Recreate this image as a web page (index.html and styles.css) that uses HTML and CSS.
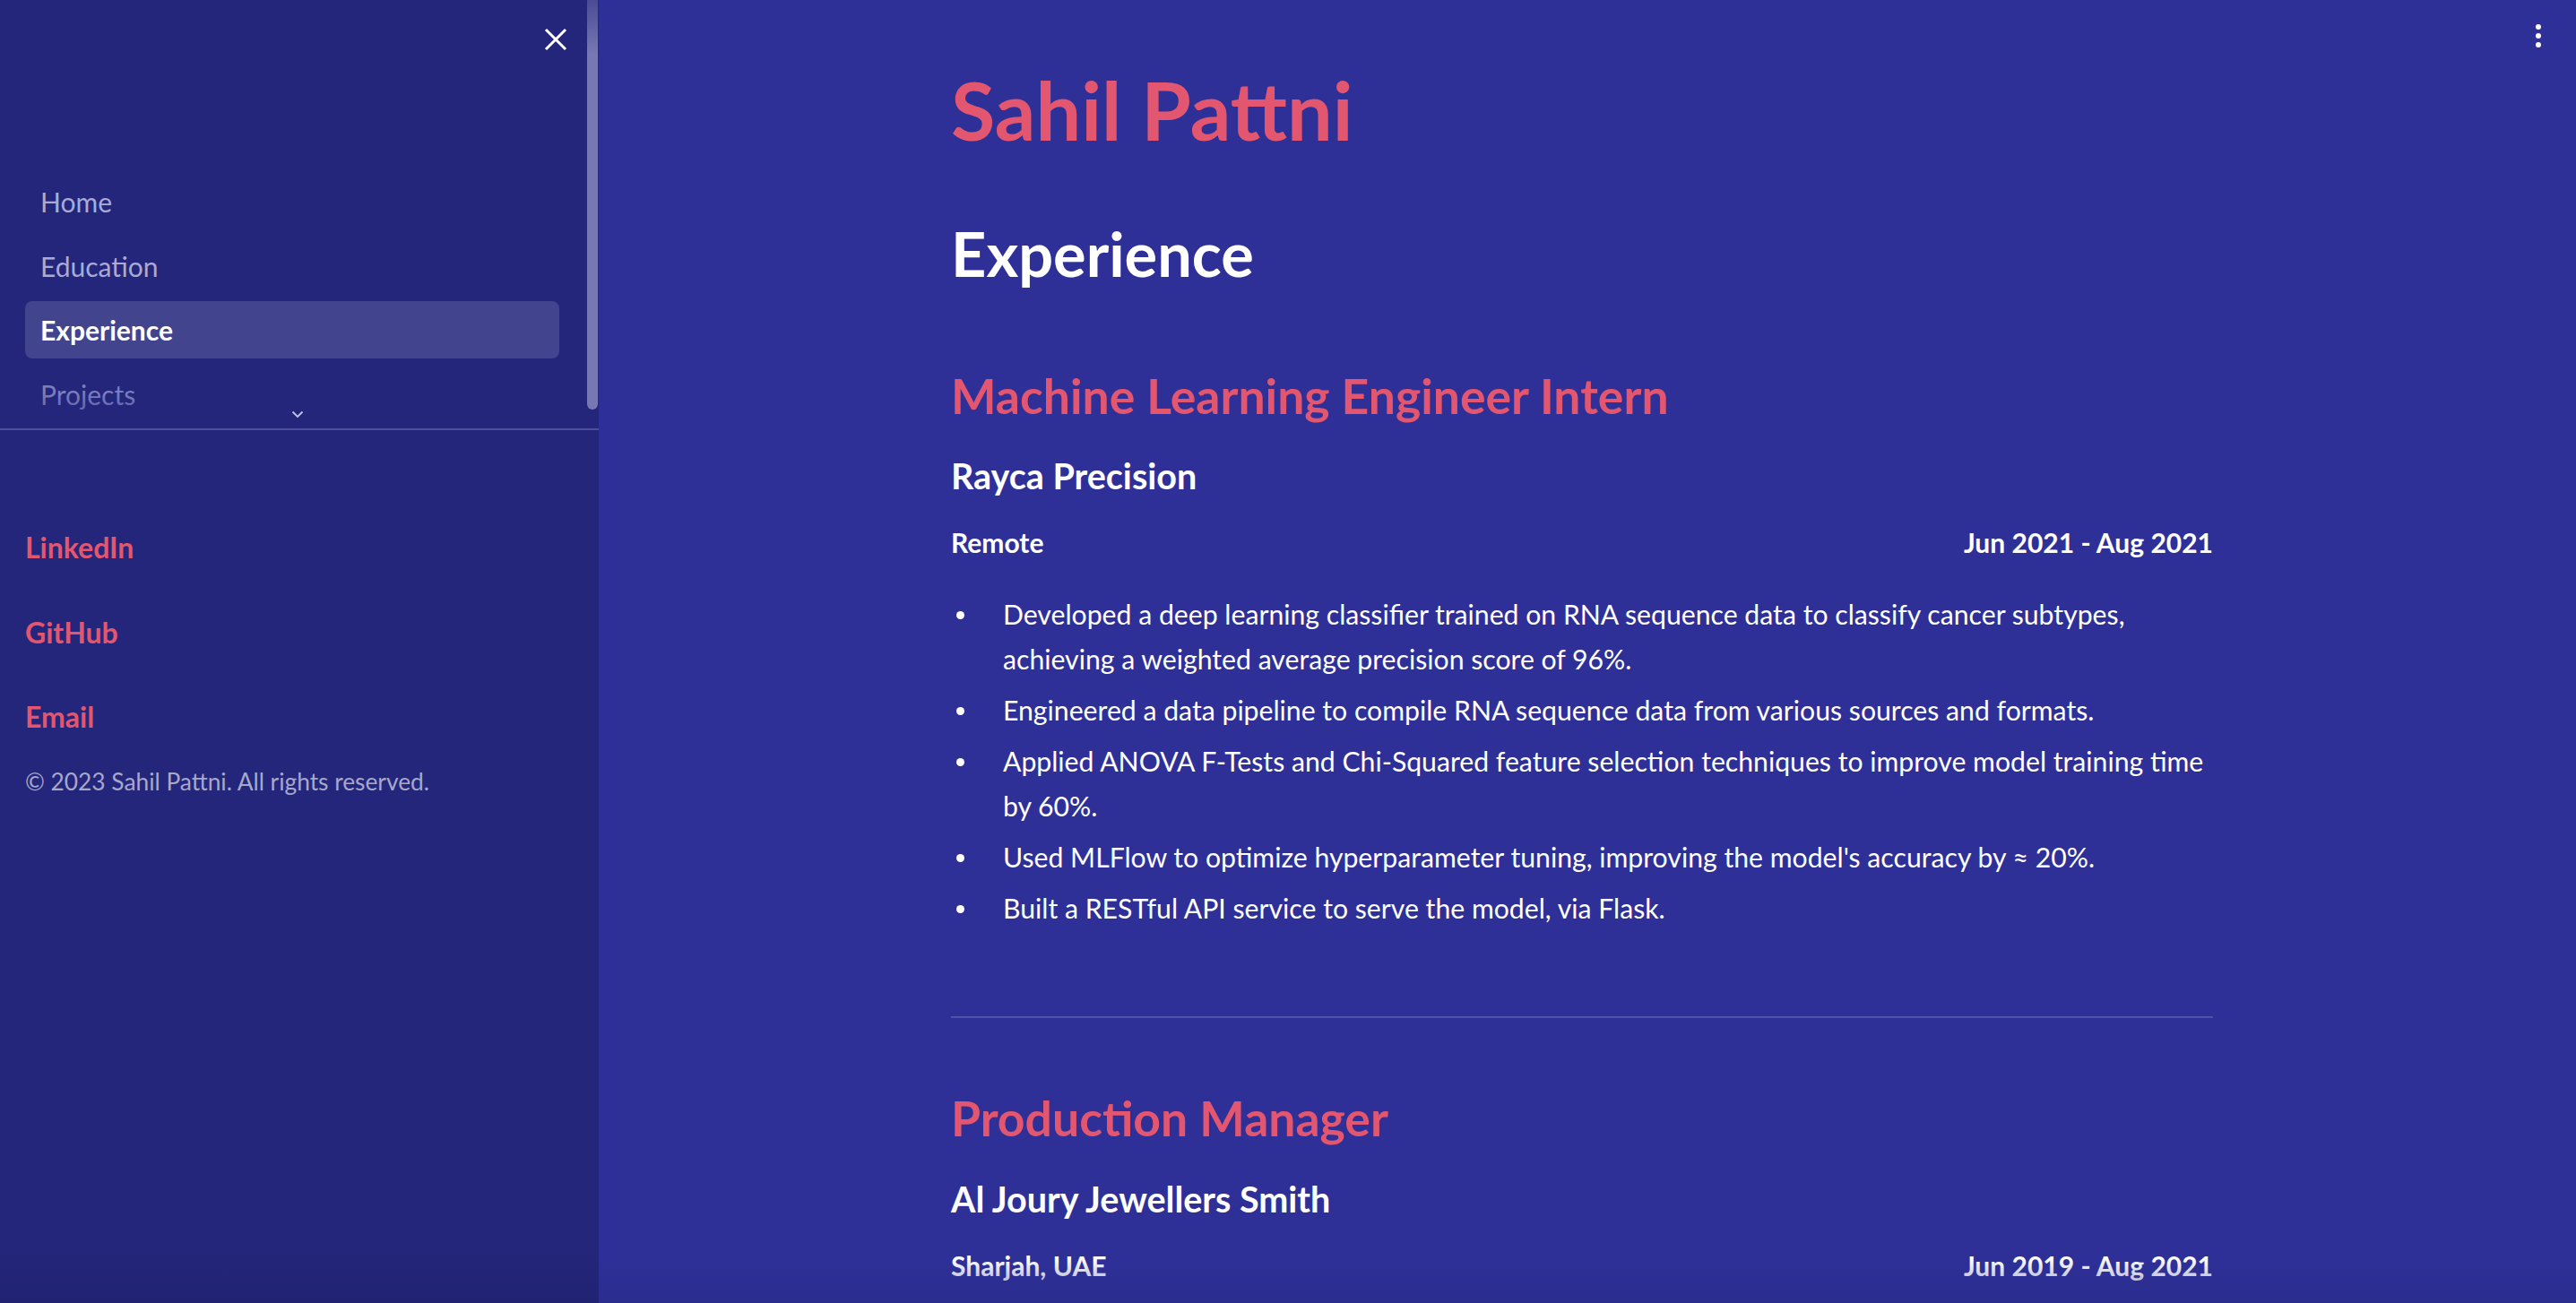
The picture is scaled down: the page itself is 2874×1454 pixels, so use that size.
FILE: index.html
```html
<!DOCTYPE html>
<html lang="en">
<head>
<meta charset="utf-8">
<title>Sahil Pattni - Experience</title>
<link rel="stylesheet" href="styles.css">
</head>
<body>
<div class="app">
  <aside class="sidebar">
    <button class="close-btn" aria-label="Close sidebar">
      <svg width="26" height="26" viewBox="0 0 26 26"><path d="M2 2 L24 24 M24 2 L2 24" stroke="#ffffff" stroke-width="3" fill="none"/></svg>
    </button>
    <nav class="nav">
      <ul class="nav-list">
        <li class="nav-item">Home</li>
        <li class="nav-item">Education</li>
        <li class="nav-item active">Experience</li>
        <li class="nav-item faded">Projects</li>
      </ul>
      <div class="nav-fade"></div>
      <div class="chevron">
        <svg width="14" height="9" viewBox="0 0 14 9"><path d="M1.5 1.5 L7 7 L12.5 1.5" stroke="#c3c4e2" stroke-width="1.8" fill="none"/></svg>
      </div>
      <div class="scroll-thumb"></div>
    </nav>
    <div class="sb-content">
      <a class="sb-link">LinkedIn</a>
      <a class="sb-link">GitHub</a>
      <a class="sb-link">Email</a>
      <p class="copyright">© 2023 Sahil Pattni. All rights reserved.</p>
    </div>
    <div class="sb-bottom"></div>
  </aside>
  <main class="main">
    <div class="kebab"><span></span><span></span><span></span></div>
    <div class="block">
      <h1 class="name">Sahil Pattni</h1>
      <h2 class="page-title">Experience</h2>

      <h3 class="role">Machine Learning Engineer Intern</h3>
      <h4 class="company">Rayca Precision</h4>
      <div class="meta"><span>Remote</span><span>Jun 2021 - Aug 2021</span></div>
      <ul class="bullets">
        <li>Developed a deep learning classifier trained on RNA sequence data to classify cancer subtypes, achieving a weighted average precision score of 96%.</li>
        <li>Engineered a data pipeline to compile RNA sequence data from various sources and formats.</li>
        <li>Applied ANOVA F-Tests and Chi-Squared feature selection techniques to improve model training time by 60%.</li>
        <li>Used MLFlow to optimize hyperparameter tuning, improving the model's accuracy by ≈ 20%.</li>
        <li>Built a RESTful API service to serve the model, via Flask.</li>
      </ul>
      <hr class="divider">

      <h3 class="role role-2">Production Manager</h3>
      <h4 class="company company-2">Al Joury Jewellers Smith</h4>
      <div class="meta meta-2"><span>Sharjah, UAE</span><span>Jun 2019 - Aug 2021</span></div>
    </div>
    <div class="main-bottom"></div>
  </main>
</div>
</body>
</html>
```

FILE: styles.css
```css
* { box-sizing: border-box; }

html, body {
  margin: 0;
  padding: 0;
  height: 1454px;
  overflow: hidden;
  font-family: "Lato", "Source Sans Pro", "Liberation Sans", sans-serif;
}

.app {
  display: flex;
  height: 1454px;
}

/* ---------- Sidebar ---------- */
.sidebar {
  position: relative;
  width: 668px;
  flex: 0 0 668px;
  background: #24267b;
  display: flex;
  flex-direction: column;
}

.close-btn {
  position: absolute;
  left: 607px;
  top: 31px;
  width: 26px;
  height: 26px;
  padding: 0;
  border: 0;
  background: transparent;
  z-index: 3;
}

.close-btn svg { display: block; }

.nav {
  position: relative;
  height: 480px;
  border-bottom: 2px solid #4d4f9c;
  padding-top: 193px;
  overflow: hidden;
}

.nav-list {
  list-style: none;
  margin: 0;
  padding: 0 44px 0 28px;
  display: flex;
  flex-direction: column;
  gap: 7.5px;
}

.nav-item {
  height: 64px;
  line-height: 64px;
  padding-left: 17px;
  border-radius: 8px;
  font-size: 30px;
  color: #a9aad6;
}

.nav-item.active {
  background: #43448e;
  color: #ffffff;
  font-weight: 700;
}

.nav-item.faded { color: #7c7ebf; }

.nav-fade {
  position: absolute;
  left: 0;
  right: 0;
  bottom: 0;
  height: 40px;
  background: linear-gradient(to bottom, rgba(36,38,123,0), rgba(36,38,123,0.6));
}

.chevron {
  position: absolute;
  left: 325px;
  top: 458px;
  line-height: 0;
}

.scroll-thumb {
  position: absolute;
  right: 1px;
  top: 0;
  width: 12px;
  height: 457px;
  border-radius: 0 0 6px 6px;
  background: linear-gradient(to bottom, #4a4b94 0px, #7778b2 60px, #7778b2 100%);
}

.sb-content {
  padding: 107px 28px 0 28px;
  display: flex;
  flex-direction: column;
  align-items: flex-start;
}

.sb-link {
  display: block;
  height: 48px;
  line-height: 48px;
  font-size: 32px;
  font-weight: 700;
  color: #e2566f;
  text-decoration: none;
  margin-bottom: 46.5px;
}

.sb-link:last-of-type { margin-bottom: 28px; }

.copyright {
  margin: 0;
  font-size: 26.3px;
  line-height: 40px;
  color: #a6a8cc;
}

.sb-bottom {
  margin-top: auto;
  height: 60px;
  background: linear-gradient(to bottom, rgba(30,31,110,0), rgba(30,31,108,0.6));
}

/* ---------- Main ---------- */
.main {
  position: relative;
  flex: 1;
  background: #2e3098;
  padding: 69px 12px 0 0;
  color: #ffffff;
}

.kebab {
  position: absolute;
  right: 39px;
  top: 27px;
  display: flex;
  flex-direction: column;
  gap: 4px;
}

.kebab span {
  width: 6px;
  height: 6px;
  border-radius: 50%;
  background: #ffffff;
}

.block {
  width: 1408px;
  margin: 0 auto;
}

.name {
  margin: 0 0 65px 0;
  font-size: 90px;
  line-height: 106px;
  font-weight: 700;
  color: #e2566f;
}

.page-title {
  margin: 0 0 81px 0;
  font-size: 68.5px;
  line-height: 86px;
  font-weight: 700;
  color: #ffffff;
}

.role {
  margin: 0 0 30px 0;
  font-size: 53.5px;
  line-height: 68px;
  font-weight: 700;
  color: #e2566f;
}

.role-2 { margin-bottom: 31px; }

.company {
  margin: 0 0 24px 0;
  font-size: 39.5px;
  line-height: 52px;
  font-weight: 700;
  color: #ffffff;
}

.company-2 { margin-bottom: 24px; }

.meta {
  display: flex;
  justify-content: space-between;
  font-size: 30px;
  line-height: 48px;
  font-weight: 700;
  color: #ffffff;
  margin: 0 0 31px 0;
}

.bullets {
  list-style: none;
  margin: 0;
  padding: 0;
}

.bullets li {
  display: flex;
  align-items: flex-start;
  font-size: 30.2px;
  line-height: 50px;
  color: #ffffff;
  margin-top: 7px;
}

.bullets li:first-child { margin-top: 0; }

.bullets li::before {
  content: "";
  flex: 0 0 9px;
  width: 9px;
  height: 9px;
  border-radius: 50%;
  background: #ffffff;
  margin: 22px 43px 0 6px;
}

.divider {
  margin: 96px 0 77px 0;
  border: 0;
  height: 2px;
  background: #4f52a8;
}

.main-bottom {
  position: absolute;
  left: 0;
  right: 0;
  bottom: 0;
  height: 50px;
  background: linear-gradient(to bottom, rgba(40,42,140,0), rgba(40,42,135,0.6));
}
```
